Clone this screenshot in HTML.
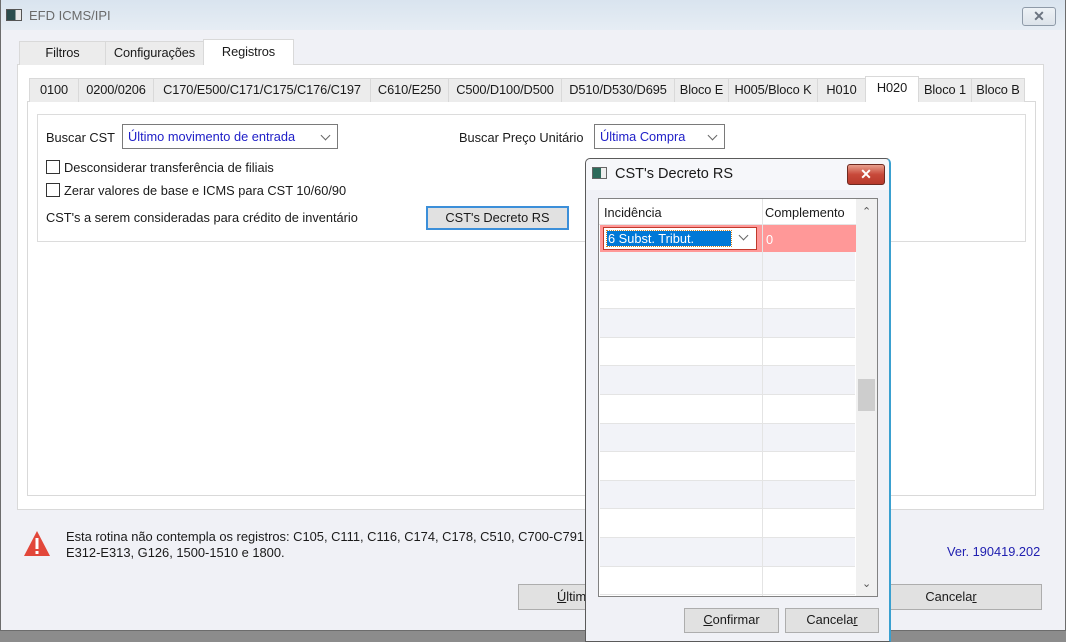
<!DOCTYPE html>
<html><head><meta charset="utf-8"><style>
*{box-sizing:border-box;margin:0;padding:0}
body{width:1066px;height:642px;position:relative;overflow:hidden;background:#8c8c8c;font-family:"Liberation Sans",sans-serif;font-size:12.8px;color:#1a1a1a}
.a{position:absolute}
.win{left:0;top:0;width:1066px;height:631px;background:#f0f1f6;border:1px solid #6c6c6c;border-top:none}
.title{left:1px;top:0;width:1064px;height:30px;background:linear-gradient(#d9e4ef,#e6edf4)}
.tab{position:absolute;height:24px;background:#ececec;border:1px solid #d9d9d9;border-bottom:none;text-align:center;line-height:22px;font-size:12.8px;white-space:nowrap;letter-spacing:-0.1px}
.tab.sel{background:#fff;height:26px}
.btn{position:absolute;background:#e1e1e1;border:1px solid #adadad;text-align:center;font-size:12.8px;line-height:22px}
.combo{position:absolute;background:#fff;border:1px solid #7a7a7a;color:#2020c8;padding-left:5px;line-height:23px;font-size:12.8px}
.chev{position:absolute;right:8px;top:7px;width:7px;height:7px;border-right:1px solid #666;border-bottom:1px solid #666;transform:rotate(45deg)}
.cb{position:absolute;width:14px;height:14px;border:1px solid #333;background:#fff}
.row{position:absolute;left:1px;width:255px;height:28.6px;border-bottom:1px solid #e4e4e4}
</style></head><body>
<div class="a win"></div>
<div class="a title"></div>
<div class="a" style="left:6px;top:9px;width:16px;height:12px;border:1px solid #555;background:linear-gradient(90deg,#2b4d4d 0 60%,#e8e8e8 60%)"></div>
<div class="a" style="left:29px;top:8px;font-size:13px;color:#6a6a6a">EFD ICMS/IPI</div>
<div class="a" style="left:1022px;top:7px;width:34px;height:19px;border:1px solid #8e9aa8;border-radius:3px;background:linear-gradient(#eef2f6,#dce3ea);text-align:center;color:#6b7480;font-size:14px;line-height:17px;font-weight:bold">✕</div>

<div class="a" style="left:17px;top:64px;width:1027px;height:446px;background:#fff;border:1px solid #d9d9d9"></div>
<div class="tab" style="left:19px;top:41px;width:87px">Filtros</div>
<div class="tab" style="left:105px;top:41px;width:99px">Configurações</div>
<div class="tab sel" style="left:203px;top:39px;width:91px;line-height:24px">Registros</div>

<div class="a" style="left:27px;top:101px;width:1009px;height:395px;background:#fff;border:1px solid #d9d9d9"></div>
<div class="tab" style="left:29px;top:78px;width:50px">0100</div>
<div class="tab" style="left:78px;top:78px;width:76px">0200/0206</div>
<div class="tab" style="left:153px;top:78px;width:218px">C170/E500/C171/C175/C176/C197</div>
<div class="tab" style="left:370px;top:78px;width:79px">C610/E250</div>
<div class="tab" style="left:448px;top:78px;width:114px">C500/D100/D500</div>
<div class="tab" style="left:561px;top:78px;width:114px">D510/D530/D695</div>
<div class="tab" style="left:674px;top:78px;width:55px">Bloco E</div>
<div class="tab" style="left:728px;top:78px;width:90px">H005/Bloco K</div>
<div class="tab" style="left:817px;top:78px;width:49px">H010</div>
<div class="tab sel" style="left:865px;top:76px;width:54px;line-height:22px">H020</div>
<div class="tab" style="left:918px;top:78px;width:54px">Bloco 1</div>
<div class="tab" style="left:971px;top:78px;width:54px">Bloco B</div>

<div class="a" style="left:37px;top:114px;width:989px;height:128px;border:1px solid #dcdcdc"></div>
<div class="a" style="left:46px;top:130px">Buscar CST</div>
<div class="combo" style="left:122px;top:124px;width:216px;height:25px">Último movimento de entrada<div class="chev"></div></div>
<div class="a" style="left:459px;top:130px">Buscar Preço Unitário</div>
<div class="combo" style="left:594px;top:124px;width:131px;height:25px">Última Compra<div class="chev"></div></div>
<div class="cb" style="left:46px;top:160px"></div>
<div class="a" style="left:64px;top:160px">Desconsiderar transferência de filiais</div>
<div class="cb" style="left:46px;top:183px"></div>
<div class="a" style="left:64px;top:183px">Zerar valores de base e ICMS para CST 10/60/90</div>
<div class="a" style="left:46px;top:210px">CST's a serem consideradas para crédito de inventário</div>
<div class="btn" style="left:426px;top:206px;width:143px;height:24px;border:2px solid #3c8fd9;line-height:20px">CST's Decreto RS</div>

<svg class="a" style="left:23px;top:530px" width="28" height="27"><path d="M14 1 L27 26 L1 26 Z" fill="#e2473a"/><rect x="12.5" y="8" width="3" height="11" fill="#fff"/><rect x="12.5" y="21" width="3" height="3" fill="#fff"/></svg>
<div class="a" style="left:66px;top:529px;line-height:16px;font-size:12.9px;white-space:nowrap">Esta rotina não contempla os registros: C105, C111, C116, C174, C178, C510, C700-C791<br>E312-E313, G126, 1500-1510 e 1800.</div>
<div class="a" style="left:947px;top:544px;color:#2020b0">Ver. 190419.202</div>
<div class="btn" style="left:518px;top:584px;width:80px;height:26px;text-align:left;padding-left:38px;line-height:24px"><u>Ú</u>ltimo</div>
<div class="btn" style="left:860px;top:584px;width:182px;height:26px;line-height:24px">Cancela<u>r</u></div>

<div class="a" style="left:585px;top:158px;width:306px;height:484px;background:#f0f1f6;border:1px solid #5a5a5a;border-right:2px solid #3aa0d0;border-radius:5px 5px 0 0"></div>
<div class="a" style="left:586px;top:159px;width:303px;height:31px;background:#f6f7fa;border-radius:5px 5px 0 0"></div>
<div class="a" style="left:592px;top:167px;width:15px;height:12px;border:1px solid #666;background:linear-gradient(90deg,#2d6a5a 0 60%,#eee 60%)"></div>
<div class="a" style="left:615px;top:166px;font-size:14.5px">CST's Decreto RS</div>
<div class="a" style="left:847px;top:164px;width:38px;height:21px;border:1px solid #6e2a20;border-radius:3px;background:linear-gradient(#e8a08e,#c8493a 50%,#b83a2c);color:#fff;text-align:center;font-weight:bold;font-size:14px;line-height:19px">✕</div>

<div class="a" style="left:598px;top:198px;width:280px;height:399px;background:#fff;border:1px solid #828282;overflow:hidden">
  <div class="a" style="left:0;top:0;width:258px;height:26px;border-bottom:1px solid #e4e4e4"></div>
  <div class="a" style="left:5px;top:6px">Incidência</div>
  <div class="a" style="left:166px;top:6px">Complemento</div>
  <div class="a" style="left:1px;top:26px;width:256px;height:27px;background:#ff9898"></div>
  <div class="a" style="left:4px;top:28px;width:154px;height:23px;background:#fff;border:1px solid #c0392b"></div>
  <div class="a" style="left:8px;top:32px;width:124px;height:15px;background:#0078d7;color:#fff;line-height:15px;padding-left:1px;outline:1px dotted #d08020">6 Subst. Tribut.</div>
  <div class="chev" style="right:auto;left:141px;top:33px"></div>
  <div class="a" style="left:167px;top:33px;color:#fff">0</div>
  <div class="row" style="top:53px;background:#f2f3f8"></div>
  <div class="row" style="top:81.6px;background:#fff"></div>
  <div class="row" style="top:110.2px;background:#f2f3f8"></div>
  <div class="row" style="top:138.8px;background:#fff"></div>
  <div class="row" style="top:167.4px;background:#f2f3f8"></div>
  <div class="row" style="top:196px;background:#fff"></div>
  <div class="row" style="top:224.6px;background:#f2f3f8"></div>
  <div class="row" style="top:253.2px;background:#fff"></div>
  <div class="row" style="top:281.8px;background:#f2f3f8"></div>
  <div class="row" style="top:310.4px;background:#fff"></div>
  <div class="row" style="top:339px;background:#f2f3f8"></div>
  <div class="row" style="top:367.6px;background:#fff"></div>
  <div class="a" style="left:163px;top:0;width:1px;height:399px;background:#e4e4e4"></div>
  <div class="a" style="left:257px;top:0;width:21px;height:397px;background:#f0f0f0"></div>
  <div class="a" style="left:259px;top:180px;width:17px;height:32px;background:#cdcdcd"></div>
  <div class="a" style="left:263px;top:6px;font-size:11px;color:#555">⌃</div>
  <div class="a" style="left:263px;top:378px;font-size:11px;color:#555">⌄</div>
</div>
<div class="btn" style="left:684px;top:608px;width:95px;height:25px"><u>C</u>onfirmar</div>
<div class="btn" style="left:785px;top:608px;width:94px;height:25px">Cancela<u>r</u></div>
</body></html>
